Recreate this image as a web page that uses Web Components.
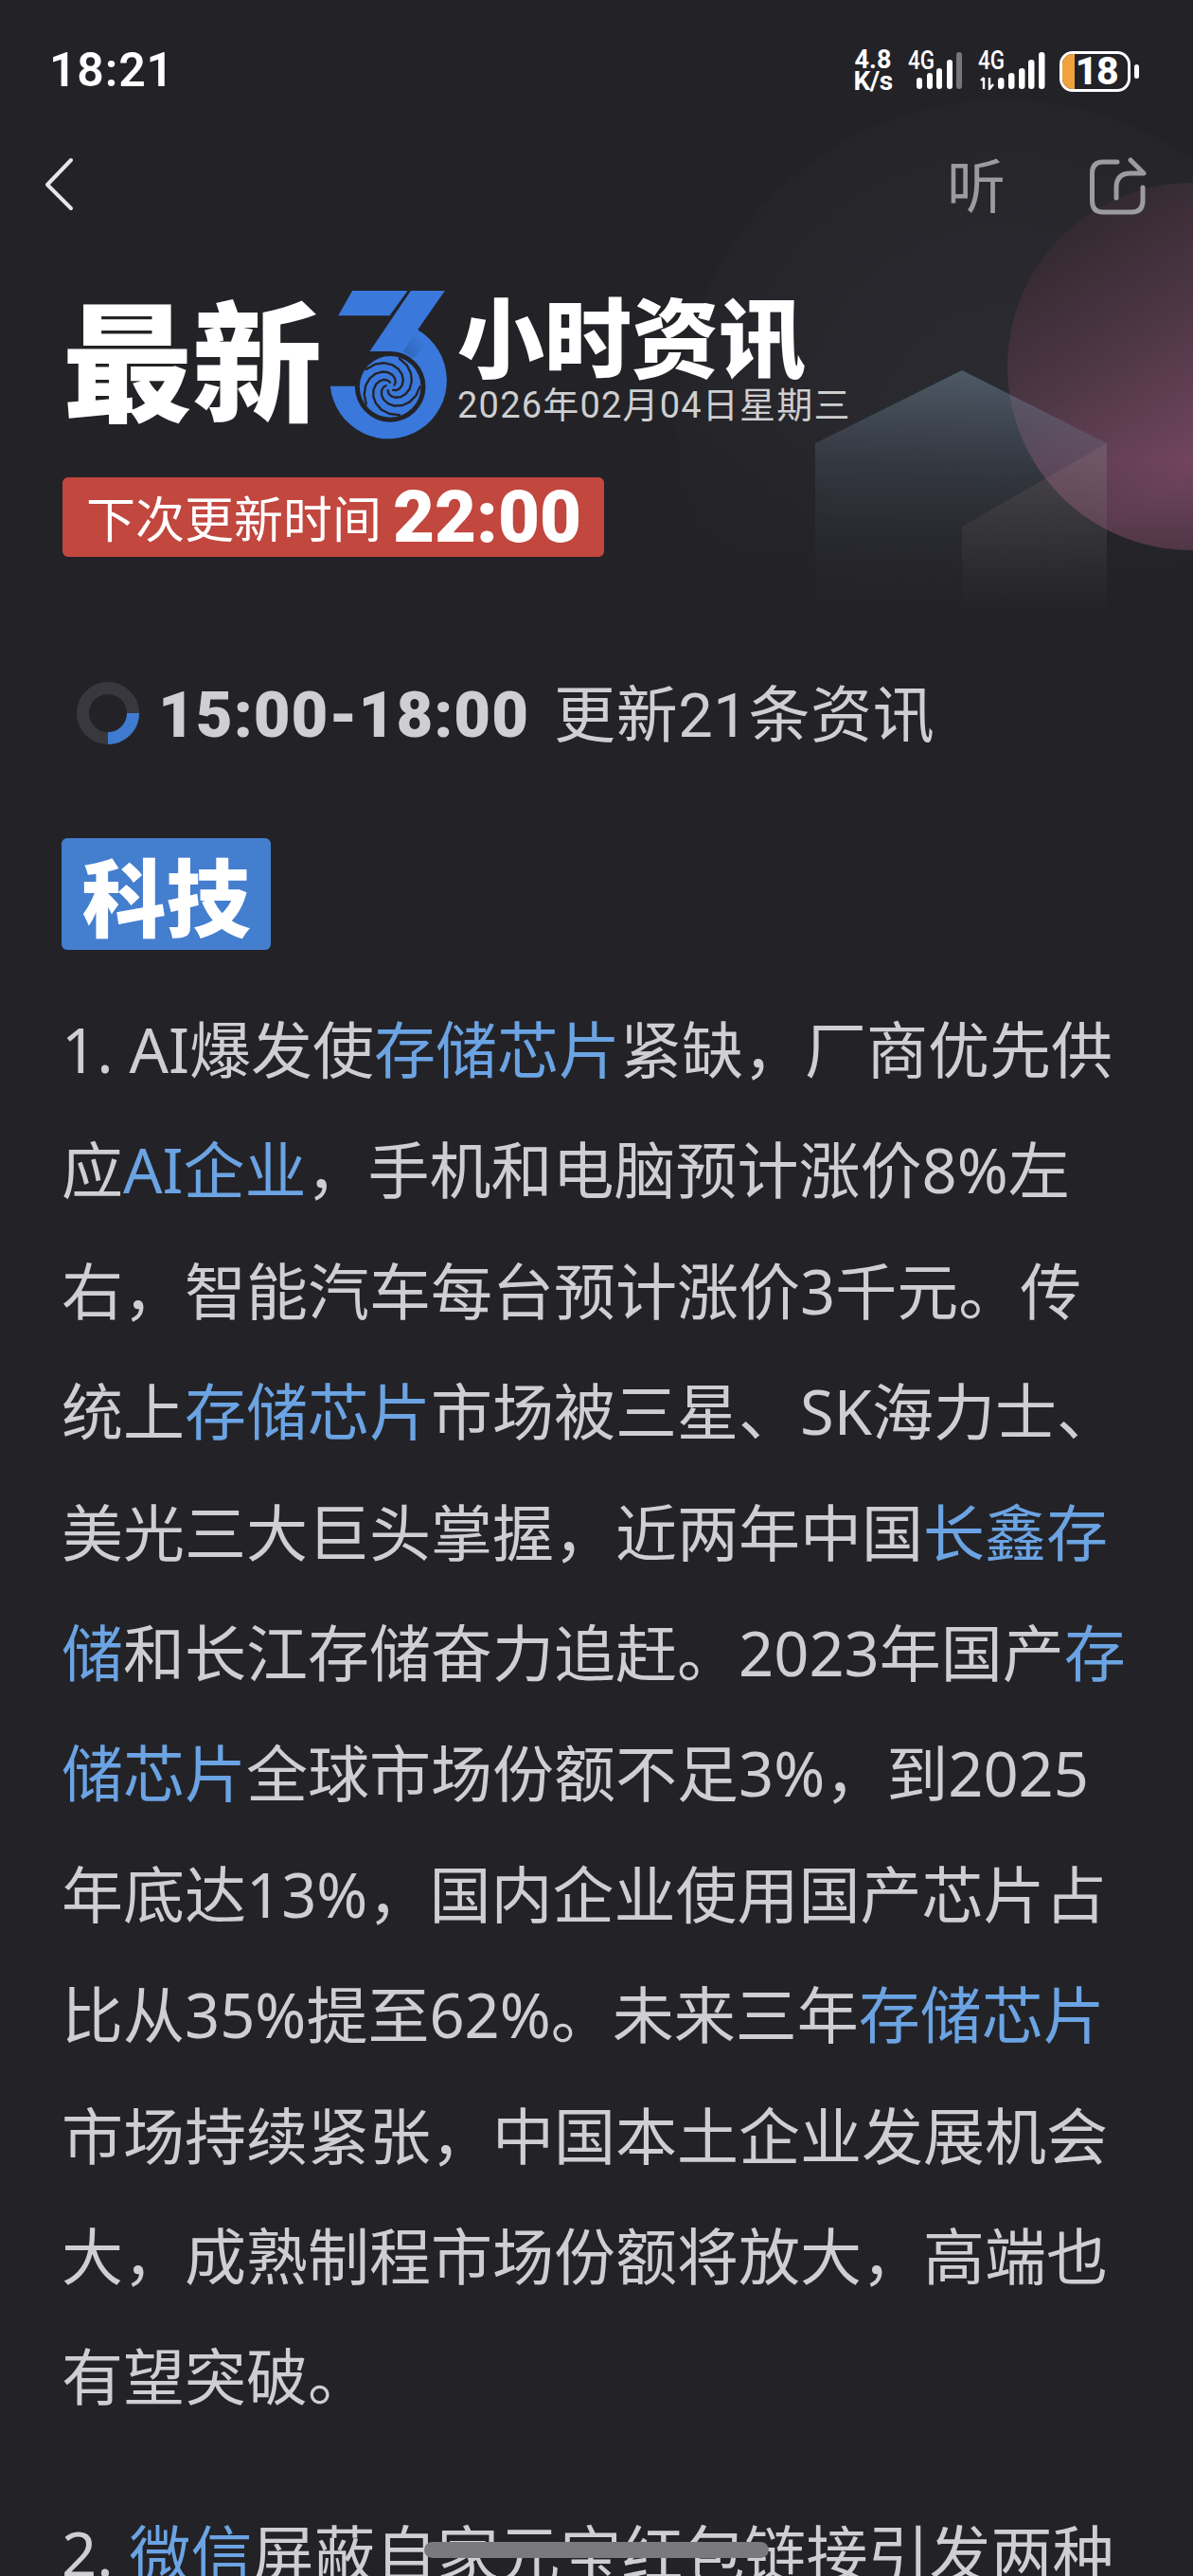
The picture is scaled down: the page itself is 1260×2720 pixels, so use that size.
<!DOCTYPE html>
<html lang="zh-CN">
<head>
<meta charset="utf-8">
<title>最新3小时资讯</title>
<style>
  html, body { margin: 0; height: 2720px; overflow: hidden; background: #232327; }
  body { position: relative; font-family: Roboto, "Noto Sans CJK SC", sans-serif; }
  news-item + news-item { margin-top: 59px; }
</style>
</head>
<body>
<page-backdrop></page-backdrop>
<status-bar></status-bar>
<nav-bar></nav-bar>
<brand-header></brand-header>
<update-line from="15:00-18:00">更新21条资讯</update-line>
<section-tag>科技</section-tag>
<news-item>1. AI爆发使<news-term>存储芯片</news-term>紧缺，厂商优先供<br>应<news-term>AI企业</news-term>，手机和电脑预计涨价8%左<br>右，智能汽车每台预计涨价3千元。传<br>统上<news-term>存储芯片</news-term>市场被三星、SK海力士、<br>美光三大巨头掌握，近两年中国<news-term>长鑫存</news-term><br><news-term>储</news-term>和长江存储奋力追赶。2023年国产<news-term>存</news-term><br><news-term>储芯片</news-term>全球市场份额不足3%，到2025<br>年底达13%，国内企业使用国产芯片占<br>比从35%提至62%。未来三年<news-term>存储芯片</news-term><br>市场持续紧张，中国本土企业发展机会<br>大，成熟制程市场份额将放大，高端也<br>有望突破。</news-item>
<news-item>2. <news-term>微信</news-term>屏蔽自家元宝红包链接引发两种</news-item>
<home-indicator></home-indicator>

<script>
const backdrop = document.createElement('template')
backdrop.innerHTML = `<style>
    :host { position: absolute; top: 0; left: 0; width: 1260px; height: 700px; display: block; z-index: 0; pointer-events: none; }
    svg { display: block; }
  </style>
  <svg width="1260" height="700" viewBox="0 0 1260 700">
    <defs>
      <radialGradient id="wash" cx="1060" cy="450" r="345" gradientUnits="userSpaceOnUse">
        <stop offset="0" stop-color="#2b2b32"/><stop offset=".8" stop-color="#26262b"/><stop offset="1" stop-color="#252529"/>
      </radialGradient>
      <linearGradient id="washFade" x1="0" y1="110" x2="0" y2="640" gradientUnits="userSpaceOnUse">
        <stop offset="0" stop-color="#fff"/><stop offset=".6" stop-color="#fff"/><stop offset="1" stop-color="#000"/>
      </linearGradient>
      <mask id="washMask"><rect width="1260" height="700" fill="url(#washFade)"/></mask>
      <linearGradient id="ball" x1="1090" y1="230" x2="1260" y2="500" gradientUnits="userSpaceOnUse">
        <stop offset="0" stop-color="#2e272c"/><stop offset=".5" stop-color="#4c3644"/><stop offset="1" stop-color="#744660"/>
      </linearGradient>
      <linearGradient id="ballFade" x1="0" y1="190" x2="0" y2="585" gradientUnits="userSpaceOnUse">
        <stop offset="0" stop-color="#fff"/><stop offset=".75" stop-color="#fff"/><stop offset="1" stop-color="#888"/>
      </linearGradient>
      <mask id="ballMask"><rect width="1260" height="700" fill="url(#ballFade)"/></mask>
      <linearGradient id="house" x1="0" y1="391" x2="0" y2="650" gradientUnits="userSpaceOnUse">
        <stop offset="0" stop-color="#72899c" stop-opacity=".5"/><stop offset=".4" stop-color="#5d7082" stop-opacity=".22"/><stop offset=".8" stop-color="#48505a" stop-opacity=".05"/><stop offset="1" stop-color="#48505a" stop-opacity="0"/>
      </linearGradient>
      <linearGradient id="facet" x1="0" y1="468" x2="0" y2="650" gradientUnits="userSpaceOnUse">
        <stop offset="0" stop-color="#c08a80" stop-opacity=".16"/><stop offset=".6" stop-color="#a08a80" stop-opacity=".08"/><stop offset="1" stop-color="#8b7770" stop-opacity="0"/>
      </linearGradient>
    </defs>
    <circle cx="1060" cy="450" r="345" fill="url(#wash)" mask="url(#washMask)"/>
    <circle cx="1258" cy="387" r="194" fill="url(#ball)" mask="url(#ballMask)"/>
    <polygon points="861,468 1016,391 1169,468 1169,650 861,650" fill="url(#house)"/>
    <polygon points="1169,468 1016,556 1016,650 1169,650" fill="url(#facet)"/>
  </svg>`

class PageBackdrop extends HTMLElement {
    constructor() {
        super();
        this.attachShadow({mode: 'open'});
        this.shadowRoot.appendChild(backdrop.content.cloneNode(true));
    }
}
customElements.define('page-backdrop', PageBackdrop)

const statusBar = document.createElement('template')
statusBar.innerHTML = `<style>
    :host { display: flex; position: relative; z-index: 1; height: 110px; box-sizing: border-box; padding: 46px 57px 0 52px; justify-content: space-between; color: #fff; font-family: Roboto, sans-serif; }
    .time { font-size: 50px; line-height: 56px; font-weight: 600; letter-spacing: .8px; }
    .icons { display: flex; height: 44px; margin-top: 7px; }
    .speed { width: 44px; margin-right: 15px; font-weight: 700; text-align: center; white-space: nowrap; }
    .speed div { font-size: 27px; line-height: 21px; }
    .speed div + div { font-size: 28px; line-height: 23px; letter-spacing: -.5px; }
    svg { display: block; }
    .sim2 { margin-left: 16px; margin-right: 15px; }
    .battery { display: flex; align-items: center; }
    .shell { position: relative; box-sizing: border-box; width: 75px; height: 43px; border: 3px solid #fff; border-radius: 14px; overflow: hidden; }
    .level { position: absolute; left: 0; top: 0; bottom: 0; width: 13px; background: #f0a23c; }
    .num { position: absolute; left: 13px; top: 0; width: 46px; text-align: center; font-size: 41px; line-height: 37px; font-weight: 800; letter-spacing: -1.5px; }
    .tip { width: 5px; height: 15px; margin-left: 4px; background: #fff; border-radius: 2.5px; }
  </style>
  <span class="time">18:21</span>
  <div class="icons">
    <div class="speed"><div>4.8</div><div>K/s</div></div>
    <svg width="58" height="42" viewBox="0 0 58 42" fill="#fff" font-family="Roboto, sans-serif">
      <text x="0" y="20" font-size="27" font-weight="500" textLength="28" lengthAdjust="spacingAndGlyphs">4G</text>
      <rect x="9" y="29" width="6" height="12" rx="3"/>
      <rect x="20" y="24" width="6" height="17" rx="3"/>
      <rect x="30" y="19" width="6" height="22" rx="3"/>
      <rect x="41" y="10" width="6" height="31" rx="3"/>
      <rect x="51" y="2" width="6" height="39" rx="3" fill="#77777a"/>
    </svg>
    <svg class="sim2" width="71" height="42" viewBox="0 0 71 42" fill="#fff" font-family="Roboto, sans-serif">
      <text x="0" y="20" font-size="27" font-weight="500" textLength="28" lengthAdjust="spacingAndGlyphs">4G</text>
      <path d="M6 29 L6 41 M3 32 L6 29" stroke="#fff" stroke-width="2.4" fill="none"/>
      <path d="M12 29 L12 41 L16 36" stroke="#fff" stroke-width="2.4" fill="none"/>
      <rect x="21" y="29" width="6.5" height="12" rx="3.2"/>
      <rect x="32" y="24" width="6.5" height="17" rx="3.2"/>
      <rect x="43" y="19" width="6.5" height="22" rx="3.2"/>
      <rect x="53" y="10" width="6.5" height="31" rx="3.2"/>
      <rect x="64" y="2" width="6.5" height="39" rx="3.2"/>
    </svg>
    <div class="battery">
      <div class="shell"><div class="level"></div><div class="num">18</div></div>
      <div class="tip"></div>
    </div>
  </div>`

class StatusBar extends HTMLElement {
    constructor() {
        super();
        this.attachShadow({mode: 'open'});
        this.shadowRoot.appendChild(statusBar.content.cloneNode(true));
    }
}
customElements.define('status-bar', StatusBar)

const navBar = document.createElement('template')
navBar.innerHTML = `<style>
    :host { display: flex; position: relative; z-index: 1; height: 190px; box-sizing: border-box; padding: 55px 49px 0 46px; align-items: flex-start; color: #9c9ca0; }
    .listen { margin-left: auto; margin-top: -7px; font-family: "Noto Sans CJK SC", sans-serif; font-size: 62px; line-height: 70px; }
    .share { margin-left: 87px; margin-top: 1px; }
    svg { display: block; }
  </style>
  <svg width="32" height="58" viewBox="0 0 32 58"><path d="M29 4 L4 30 L29 55" fill="none" stroke="#e6e6e8" stroke-width="4" stroke-linecap="round" stroke-linejoin="round"/></svg>
  <span class="listen">听</span>
  <svg class="share" width="62" height="62" viewBox="1149 165 62 62" fill="none" stroke="#9c9ca0" stroke-width="5" stroke-linecap="round" stroke-linejoin="round">
    <path d="M1180 170 L1165 170 Q1153.5 170 1153.5 182 L1153.5 211 Q1153.5 223 1165 223 L1195 223 Q1207 223 1207 211 L1207 197"/>
    <path d="M1194 168 L1208 182 L1194 182 Q1179 182 1179 197 L1179 208"/>
  </svg>`

class NavBar extends HTMLElement {
    constructor() {
        super();
        this.attachShadow({mode: 'open'});
        this.shadowRoot.appendChild(navBar.content.cloneNode(true));
    }
}
customElements.define('nav-bar', NavBar)

// typhoon arm of the logo, a spiral from the middle of the disc out to its rim
function spiralPath() {
    let d = ''
    for (let t = 0; t <= 1.001; t += 0.1) {
        let r = 14 + 80 * t
        let a = (1 - t) * 3.4
        d += (t == 0 ? 'M' : 'L') + (r * Math.cos(a)).toFixed(1) + ' ' + (r * Math.sin(a)).toFixed(1) + ' '
    }
    return d
}

const brandHeader = document.createElement('template')
brandHeader.innerHTML = `<style>
    :host { display: block; position: relative; z-index: 1; padding: 6px 0 0 66px; color: #fff; font-family: "Noto Sans CJK SC", sans-serif; }
    .title { display: flex; align-items: flex-start; }
    .big { margin-top: -12px; margin-right: 7px; font-size: 137px; line-height: 163px; font-weight: 900; white-space: nowrap; }
    svg { display: block; flex: none; }
    .side { margin-left: 9px; margin-top: -4px; white-space: nowrap; }
    .side b { display: block; font-size: 92px; line-height: 100px; font-weight: 900; }
    .side span { display: block; margin-top: 3px; font-family: Roboto, "Noto Sans CJK SC", sans-serif; font-size: 38px; line-height: 46px; letter-spacing: 1.2px; color: #cfcfd1; }
    .next { display: flex; align-items: center; box-sizing: border-box; width: 572px; height: 84px; margin-top: 33px; padding-left: 25px; background: #c1473f; border-radius: 6px; }
    .next span { font-size: 52px; line-height: 84px; }
    .next strong { margin-left: 12px; font-family: Roboto, sans-serif; font-size: 76px; line-height: 84px; font-weight: 900; }
  </style>
  <div class="title">
    <span class="big">最新</span>
    <svg width="127" height="165" viewBox="75 45 380 495">
      <defs>
        <linearGradient id="fold" x1="300" y1="240" x2="370" y2="200" gradientUnits="userSpaceOnUse">
          <stop offset="0" stop-color="#2f63b4"/><stop offset="1" stop-color="#3a78dc"/>
        </linearGradient>
        <path id="arm" d="${spiralPath()}" fill="none" stroke="#232327" stroke-width="7" stroke-linecap="round" stroke-linejoin="round"/>
      </defs>
      <polygon points="150,48 325,48 268,127 105,127" fill="#3a78dc"/>
      <path d="M335 48 L443 48 L357 172 A185 185 0 1 1 80 350 L158 350 A112 112 0 1 0 270 240 L205 240 Z" fill="#3a78dc"/>
      <polygon points="310,240 357,172 392,200 345,262" fill="url(#fold)"/>
      <circle cx="270" cy="352" r="97" fill="#3a78dc"/>
      <g transform="translate(270 352)">
        <use href="#arm"/>
        <use href="#arm" transform="rotate(72)"/>
        <use href="#arm" transform="rotate(144)"/>
        <use href="#arm" transform="rotate(216)"/>
        <use href="#arm" transform="rotate(288)"/>
      </g>
    </svg>
    <div class="side"><b>小时资讯</b><span>2026年02月04日星期三</span></div>
  </div>
  <div class="next"><span>下次更新时间</span><strong>22:00</strong></div>`

class BrandHeader extends HTMLElement {
    constructor() {
        super();
        this.attachShadow({mode: 'open'});
        this.shadowRoot.appendChild(brandHeader.content.cloneNode(true));
    }
}
customElements.define('brand-header', BrandHeader)

const updateLine = document.createElement('template')
updateLine.innerHTML = `<style>
    :host { display: flex; position: relative; z-index: 1; align-items: center; height: 76px; margin-top: 127px; padding-left: 81px; color: #cfcfd1; font-family: Roboto, "Noto Sans CJK SC", sans-serif; white-space: nowrap; }
    svg { display: block; flex: none; }
    .range { margin-left: 20px; margin-top: 3px; font-size: 67px; font-weight: 900; letter-spacing: 1px; }
    .note { margin-left: 26px; margin-top: -6px; font-size: 65px; letter-spacing: .6px; }
  </style>
  <svg width="66" height="66" viewBox="0 0 66 66" fill="none" stroke-width="13">
    <circle cx="33" cy="33" r="26.5" stroke="#38383e"/>
    <path d="M59.5 33 A26.5 26.5 0 0 1 33 59.5" stroke="#3f7bd0"/>
  </svg>
  <span class="range"></span>
  <span class="note"><slot></slot></span>`

class UpdateLine extends HTMLElement {
    constructor() {
        super();
        this.attachShadow({mode: 'open'});
        this.shadowRoot.appendChild(updateLine.content.cloneNode(true));
    }
    connectedCallback() {
        this.shadowRoot.querySelector('.range').textContent = this.getAttribute('from')
    }
}
customElements.define('update-line', UpdateLine)

const sectionTag = document.createElement('template')
sectionTag.innerHTML = `<style>
    :host { display: block; position: relative; z-index: 1; margin: 94px 0 0 65px; width: 221px; height: 118px; background: #447ecf; border-radius: 6px; color: #fff; font-family: "Noto Sans CJK SC", sans-serif; font-size: 89px; line-height: 118px; font-weight: 900; text-align: center; }
  </style>
  <slot></slot>`

class SectionTag extends HTMLElement {
    constructor() {
        super();
        this.attachShadow({mode: 'open'});
        this.shadowRoot.appendChild(sectionTag.content.cloneNode(true));
    }
}
customElements.define('section-tag', SectionTag)

const newsItem = document.createElement('template')
newsItem.innerHTML = `<style>
    :host { display: block; position: relative; z-index: 1; margin: 42px 0 0 65px; color: #cfcfd1; font-family: "Noto Sans", "Noto Sans CJK SC", sans-serif; font-size: 65px; line-height: 127.4px; white-space: nowrap; }
  </style><slot></slot>`

class NewsItem extends HTMLElement {
    constructor() {
        super();
        this.attachShadow({mode: 'open'});
        this.shadowRoot.appendChild(newsItem.content.cloneNode(true));
    }
}
customElements.define('news-item', NewsItem)

// no whitespace before the slot here, it would show up as a gap in the sentence
const newsTerm = document.createElement('template')
newsTerm.innerHTML = `<style>:host { display: inline; color: #6ba3e3; }</style><slot></slot>`

class NewsTerm extends HTMLElement {
    constructor() {
        super();
        this.attachShadow({mode: 'open'});
        this.shadowRoot.appendChild(newsTerm.content.cloneNode(true));
    }
}
customElements.define('news-term', NewsTerm)

const homeIndicator = document.createElement('template')
homeIndicator.innerHTML = `<style>
    :host { display: block; position: absolute; z-index: 2; left: 448px; top: 2684px; width: 364px; height: 17px; border-radius: 8.5px; background: #7a7a7c; }
  </style>`

class HomeIndicator extends HTMLElement {
    constructor() {
        super();
        this.attachShadow({mode: 'open'});
        this.shadowRoot.appendChild(homeIndicator.content.cloneNode(true));
    }
}
customElements.define('home-indicator', HomeIndicator)
</script>
</body>
</html>
